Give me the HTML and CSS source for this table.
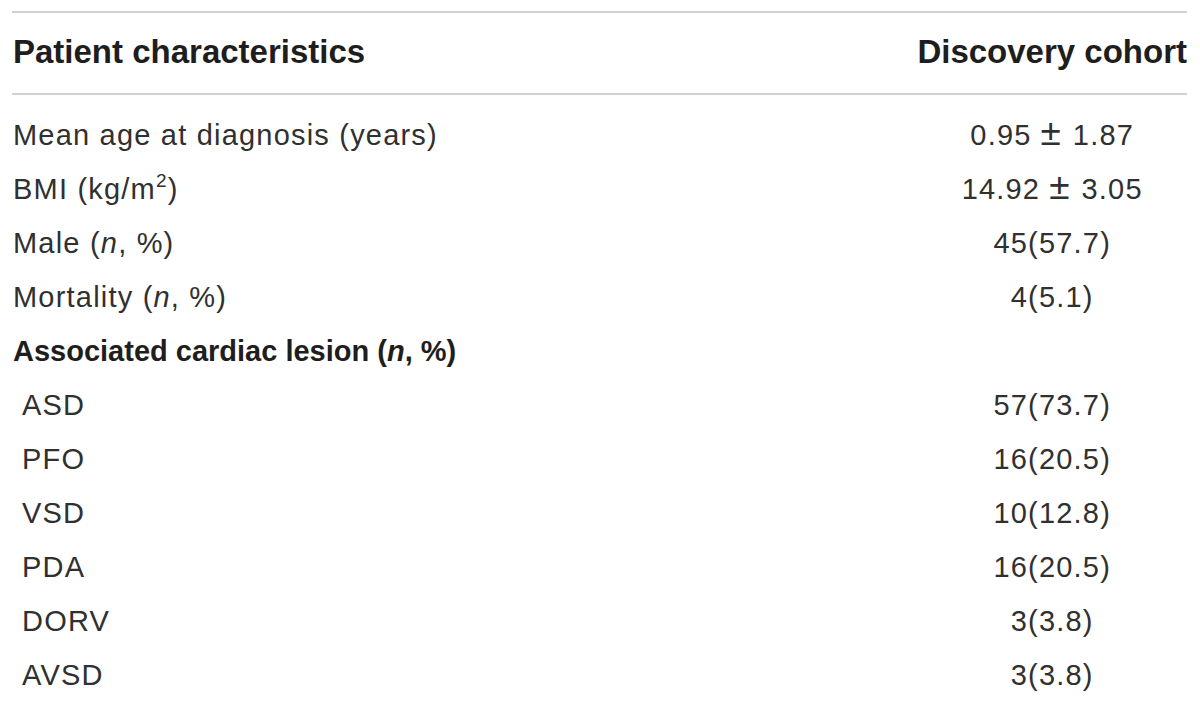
FILE: index.html
```html
<!DOCTYPE html>
<html lang="en">
<head>
<meta charset="utf-8">
<title>Patient characteristics</title>
<link rel="stylesheet" href="styles.css">
</head>
<body>
<table class="tbl">
  <thead>
    <tr>
      <th class="lbl-h">Patient characteristics</th>
      <th class="val-h">Discovery cohort</th>
    </tr>
  </thead>
  <tbody>
    <tr class="first"><td class="lbl">Mean age at diagnosis (years)</td><td class="val">0.95<span class="pm">±</span>1.87</td></tr>
    <tr><td class="lbl">BMI (kg/m<sup>2</sup>)</td><td class="val">14.92<span class="pm">±</span>3.05</td></tr>
    <tr><td class="lbl">Male (<i>n</i>, %)</td><td class="val">45(57.7)</td></tr>
    <tr><td class="lbl">Mortality (<i>n</i>, %)</td><td class="val">4(5.1)</td></tr>
    <tr><td class="lbl group">Associated cardiac lesion (<i>n</i>, %)</td><td class="val"></td></tr>
    <tr><td class="lbl sub">ASD</td><td class="val">57(73.7)</td></tr>
    <tr><td class="lbl sub">PFO</td><td class="val">16(20.5)</td></tr>
    <tr><td class="lbl sub">VSD</td><td class="val">10(12.8)</td></tr>
    <tr><td class="lbl sub">PDA</td><td class="val">16(20.5)</td></tr>
    <tr><td class="lbl sub">DORV</td><td class="val">3(3.8)</td></tr>
    <tr><td class="lbl sub">AVSD</td><td class="val">3(3.8)</td></tr>
  </tbody>
</table>
</body>
</html>
```

FILE: styles.css
```css
html, body {
  margin: 0;
  padding: 0;
  background: #ffffff;
}

body {
  font-family: "Liberation Sans", Arial, sans-serif;
  color: #303030;
  padding: 11px 13px 0 12px;
}

.tbl {
  width: 100%;
  border-collapse: collapse;
  border-spacing: 0;
}

.tbl thead tr {
  border-top: 2px solid #d2d2d2;
  border-bottom: 2px solid #d2d2d2;
}

.tbl th {
  font-size: 33px;
  font-weight: bold;
  color: #1e1e1e;
  height: 78px;
  padding: 0 0 2px 0;
  vertical-align: middle;
  white-space: nowrap;
}

.lbl-h {
  text-align: left;
  padding-left: 1px !important;
}

.val-h {
  text-align: right;
  width: 1%;
}

.tbl td {
  font-size: 29px;
  letter-spacing: 1.2px;
  line-height: 54px;
  height: 54px;
  padding: 0;
  white-space: nowrap;
}

.tbl tr.first td {
  padding-top: 13px;
}

.lbl {
  text-align: left;
  padding-left: 1px !important;
}

.lbl.sub {
  padding-left: 10px !important;
}

.lbl.group {
  font-weight: bold;
  letter-spacing: 0;
  color: #1e1e1e;
}

.val {
  text-align: center;
}

.pm {
  display: inline-block;
  font-size: 37px;
  line-height: 1;
  margin: 0 12px 0 9px;
  letter-spacing: 0;
}

sup {
  font-size: 19px;
  line-height: 0;
  vertical-align: 12px;
}
```
